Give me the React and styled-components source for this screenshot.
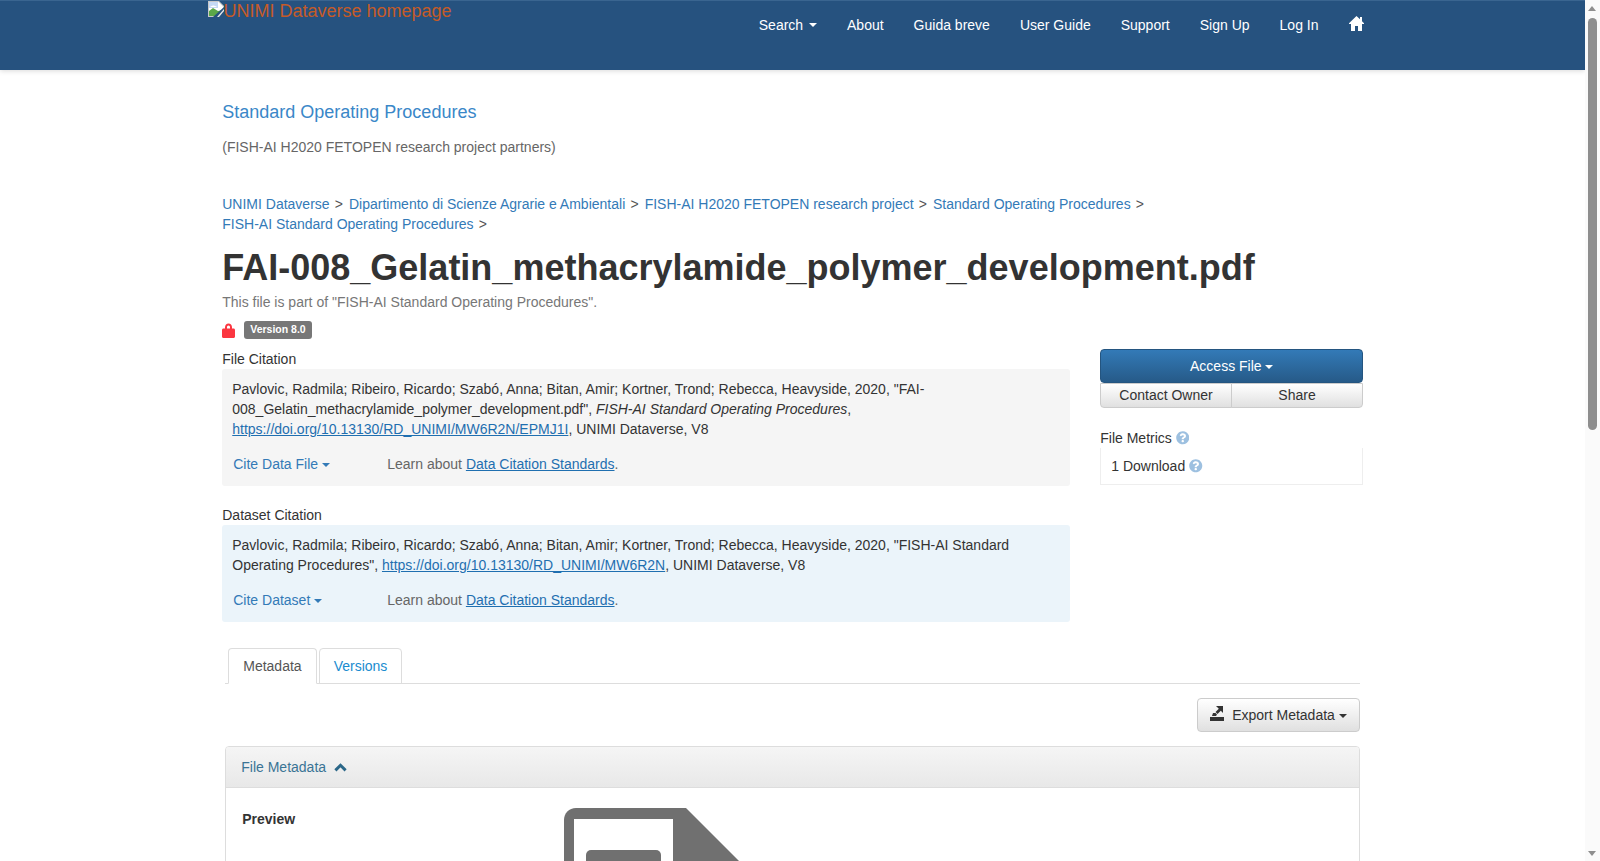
import React from "react";
import styled, { createGlobalStyle } from "styled-components";
import { FaQuestionCircle } from "react-icons/fa";

const GlobalStyle = createGlobalStyle`
  body {
    margin: 0;
    background: #fff;
    color: #333;
    font-family: "Liberation Sans", Arial, sans-serif;
    font-size: 14px;
    line-height: 20px;
  }
  * {
    box-sizing: border-box;
  }
`;

const Shell = styled.div`
  margin-right: 15px;
`;

const ScrollTrack = styled.div`
  position: fixed;
  top: 0;
  right: 0;
  bottom: 0;
  width: 15px;
  background: #fafafa;
`;

const ScrollArrow = styled.span`
  position: absolute;
  left: 3px;
  ${(p) => (p.$down ? "bottom: 5px;" : "top: 6px;")}
  width: 0;
  height: 0;
  border-left: 4px solid transparent;
  border-right: 4px solid transparent;
  ${(p) => (p.$down ? "border-top: 5px solid #8e8e8e;" : "border-bottom: 5px solid #8e8e8e;")}
`;

const ScrollThumb = styled.span`
  position: absolute;
  left: 3px;
  top: 18px;
  width: 9px;
  height: 412px;
  background: #8e8e8e;
  border-radius: 5px;
`;

const Navbar = styled.nav`
  height: 70px;
  background: #26527f;
  border-top: 1px solid #3a6590;
  box-shadow: 0 1px 5px rgba(0, 0, 0, 0.15);
`;

const NavInner = styled.div`
  width: 1170px;
  margin: 0 auto;
  display: flex;
  justify-content: space-between;
  align-items: flex-start;
`;

const Brand = styled.a`
  display: flex;
  align-items: flex-start;
  color: #c55b28;
  font-size: 18px;
  line-height: 20px;
`;

const NavList = styled.div`
  display: flex;
  margin-right: -1px;
`;

const NavLink = styled.a`
  padding: 14px 15px;
  color: #fff;
  display: flex;
  align-items: center;
  height: 48px;
`;

const Caret = styled.span`
  display: inline-block;
  width: 0;
  height: 0;
  margin-left: ${(p) => p.$gap || 0}px;
  vertical-align: middle;
  border-top: 4px solid currentColor;
  border-right: 4px solid transparent;
  border-left: 4px solid transparent;
`;

const Page = styled.main`
  width: 1170px;
  margin: 0 auto;
  padding: 0 15.25px 0 14.75px;
  min-height: 1666px;
`;

const DataverseHeader = styled.header`
  padding-top: 32px;
  height: 124px;
`;

const DataverseName = styled.a`
  display: block;
  color: #3a87c8;
  font-size: 18px;
`;

const Tagline = styled.p`
  margin: 15px 0 0;
  color: #666;
`;

const Breadcrumbs = styled.div`
  display: flex;
  flex-wrap: wrap;
  width: 960px;
`;

const Crumb = styled.span`
  color: #555;
  white-space: nowrap;
  margin-right: 6px;
  &::after {
    content: ">";
    margin-left: 5.2px;
  }
`;

const CrumbLink = styled.a`
  color: #337ab7;
`;

const Title = styled.h1`
  margin: 14px 0 0;
  font-size: 36px;
  line-height: 40px;
  font-weight: 700;
  color: #333;
`;

const PartOf = styled.p`
  margin: 4px 0 0;
  color: #777;
`;

const StatusRow = styled.div`
  display: flex;
  align-items: center;
  gap: 9px;
  height: 18px;
  margin-top: 9px;
`;

const VersionLabel = styled.span`
  background: #777;
  color: #fff;
  font-size: 10.5px;
  font-weight: 700;
  line-height: 10.5px;
  padding: 3px 6px 4px;
  border-radius: 3px;
`;

const Columns = styled.div`
  display: grid;
  grid-template-columns: 848px 263px;
  column-gap: 30px;
  margin-top: 10px;
`;

const CitationBlock = styled.section`
  margin-bottom: 19px;
  &:last-child {
    margin-bottom: 18px;
  }
`;

const BlockTitle = styled.div`
  height: 20px;
`;

const CitationBox = styled.div`
  padding: 10px 10px 12px;
  border-radius: 3px;
  background: ${(p) => p.$bg};
  color: #333;
`;

const CiteRow = styled.div`
  display: flex;
  margin-top: 15px;
`;

const CiteButton = styled.a`
  width: 155px;
  padding-left: 1px;
  color: #337ab7;
`;

const Learn = styled.span`
  color: #666;
`;

const DoiLink = styled.a`
  color: #1f6fb0;
  text-decoration: underline;
`;

const AccessButton = styled.a`
  display: block;
  height: 34px;
  line-height: 32px;
  text-align: center;
  color: #fff;
  border: 1px solid #245580;
  border-radius: 4px;
  background: linear-gradient(to bottom, #337ab7 0%, #265a88 100%);
`;

const ButtonGroup = styled.div`
  display: grid;
  grid-template-columns: 1fr 1fr;
`;

const GroupButton = styled.a`
  height: 25px;
  line-height: 23px;
  text-align: center;
  color: #333;
  border: 1px solid #ccc;
  background: linear-gradient(to bottom, #fff 0%, #e0e0e0 100%);
  border-radius: ${(p) => (p.$first ? "0 0 0 4px" : "0 0 4px 0")};
  margin-left: ${(p) => (p.$first ? 0 : -1)}px;
`;

const MetricsTitle = styled.div`
  margin-top: 20px;
  height: 20px;
  display: flex;
  align-items: center;
  gap: 4px;
`;

const MetricsBox = styled.div`
  height: 37px;
  padding: 8px 10px;
  display: flex;
  align-items: center;
  gap: 4px;
  border: 1px solid #eee;
  border-top: none;
`;

const Tabs = styled.div`
  display: flex;
  gap: 3px;
  margin: 8px 2px 0 3px;
  padding-left: 3px;
  height: 36px;
  border-bottom: 1px solid #ddd;
`;

const Tab = styled.a`
  height: 36px;
  padding: 7px 14px 7px 14px;
  margin-right: ${(p) => (p.$active ? -1 : 0)}px;
  border: 1px solid #ddd;
  border-bottom: ${(p) => (p.$active ? "1px solid #fff" : "1px solid #ddd")};
  border-radius: 4px 4px 0 0;
  color: ${(p) => (p.$active ? "#555" : "#1a8ccf")};
`;

const Toolbar = styled.div`
  display: flex;
  justify-content: flex-end;
  margin: 14px 2px 14px 3px;
`;

const ExportButton = styled.a`
  display: block;
  height: 34px;
  line-height: 32px;
  padding: 0 12px 0 12px;
  white-space: nowrap;
  color: #333;
  border: 1px solid #ccc;
  border-radius: 4px;
  background: linear-gradient(to bottom, #fff 0%, #e0e0e0 100%);
`;

const ExportIcon = styled.svg`
  width: 14px;
  height: 15px;
  margin-right: 8.5px;
  vertical-align: -1px;
`;

const Panel = styled.section`
  margin: 0 2px 0 3px;
  border: 1px solid #ddd;
  border-radius: 4px;
  min-height: 900px;
`;

const PanelHeading = styled.div`
  height: 41px;
  padding: 0 15px;
  display: flex;
  align-items: center;
  gap: 8px;
  color: #3a7495;
  background: linear-gradient(to bottom, #f5f5f5 0%, #e8e8e8 100%);
  border-bottom: 1px solid #ddd;
  border-radius: 3px 3px 0 0;
`;

const PanelBody = styled.div`
  display: grid;
  grid-template-columns: 322px 1fr;
  padding: 20px 16px;
`;

const PreviewLabel = styled.strong`
  font-weight: 700;
  color: #333;
  line-height: 22px;
`;

const BigFile = styled.svg`
  display: block;
  width: 190px;
  height: 220px;
`;

const BrokenImage = () => (
  <svg width="16" height="16" viewBox="0 0 16 16">
    <path d="M0 0h11l5 5v11H0z" fill="#c9c9c9" />
    <path d="M1 1h9.500l4.500 4.500V15H1z" fill="#fff" />
    <path d="M1 10l4-3 5 3 5-1v6H1z" fill="#5ba849" />
    <path d="M1 1h9v6H1z" fill="#c5d9f5" />
    <path d="M2 6c2-2 4-2 7 0z" fill="#fff" />
    <path d="M16 6L5 16h11z" fill="#26527f" />
    <path d="M16 8l-7 8h2l5-6z" fill="#e8e8e8" />
  </svg>
);

const LockIcon = () => (
  <svg width="13" height="15" viewBox="0 0 13 15">
    <path
      d="M3 5.500V4.200C3 2 4.500 .5 6.500 .5S10 2 10 4.200V5.500h1.500c.9 0 1.500.6 1.500 1.500v6.500c0 .9-.6 1.500-1.500 1.500h-10C.6 15 0 14.400 0 13.500V7c0-.9.6-1.500 1.500-1.500zm2 0h3V4.300C8 3.300 7.400 2.500 6.500 2.500S5 3.300 5 4.300z"
      fill="#fb3640"
    />
  </svg>
);

const HomeIcon = () => (
  <svg width="15" height="15" viewBox="0 0 15 15" style={{ marginTop: -3 }}>
    <path
      d="M7.500 0L11 3.300V1h2v4.200L15 7.200V8h-2v7H9v-5H6v5H2V8H0v-.8z"
      fill="#fff"
    />
  </svg>
);

const ChevronUp = () => (
  <svg width="13" height="9" viewBox="0 0 13 9">
    <path d="M1.400 7.400L6.500 2.300l5.100 5.100" fill="none" stroke="#2b6788" strokeWidth="3" />
  </svg>
);

const breadcrumbs = [
  "UNIMI Dataverse",
  "Dipartimento di Scienze Agrarie e Ambientali",
  "FISH-AI H2020 FETOPEN research project",
  "Standard Operating Procedures",
  "FISH-AI Standard Operating Procedures",
];

const Help = () => <FaQuestionCircle size={13.5} color="#9dc0e0" />;

export default function App() {
  return (
    <>
      <GlobalStyle />
      <Shell>
        <Navbar>
          <NavInner>
            <Brand>
              <BrokenImage />
              UNIMI Dataverse homepage
            </Brand>
            <NavList>
              <NavLink>
                Search&nbsp;
                <Caret $gap={2} />
              </NavLink>
              <NavLink>About</NavLink>
              <NavLink>Guida breve</NavLink>
              <NavLink>User Guide</NavLink>
              <NavLink>Support</NavLink>
              <NavLink>Sign Up</NavLink>
              <NavLink>Log In</NavLink>
              <NavLink>
                <HomeIcon />
              </NavLink>
            </NavList>
          </NavInner>
        </Navbar>
        <Page>
          <DataverseHeader>
            <DataverseName>Standard Operating Procedures</DataverseName>
            <Tagline>(FISH-AI H2020 FETOPEN research project partners)</Tagline>
          </DataverseHeader>
          <Breadcrumbs>
            {breadcrumbs.map((b) => (
              <Crumb key={b}>
                <CrumbLink>{b}</CrumbLink>
              </Crumb>
            ))}
          </Breadcrumbs>
          <Title>FAI-008_Gelatin_methacrylamide_polymer_development.pdf</Title>
          <PartOf>This file is part of "FISH-AI Standard Operating Procedures".</PartOf>
          <StatusRow>
            <LockIcon />
            <VersionLabel>Version 8.0</VersionLabel>
          </StatusRow>
          <Columns>
            <div>
              <CitationBlock>
                <BlockTitle>File Citation</BlockTitle>
                <CitationBox $bg="#f5f5f5">
                  Pavlovic, Radmila; Ribeiro, Ricardo; Szabó, Anna; Bitan, Amir; Kortner, Trond; Rebecca, Heavyside, 2020, "FAI-
                  <br />
                  008_Gelatin_methacrylamide_polymer_development.pdf", <em>FISH-AI Standard Operating Procedures</em>,
                  <br />
                  <DoiLink>https://doi.org/10.13130/RD_UNIMI/MW6R2N/EPMJ1I</DoiLink>, UNIMI Dataverse, V8
                  <CiteRow>
                    <CiteButton>
                      Cite Data File <Caret />
                    </CiteButton>
                    <Learn>
                      Learn about <DoiLink>Data Citation Standards</DoiLink>.
                    </Learn>
                  </CiteRow>
                </CitationBox>
              </CitationBlock>
              <CitationBlock>
                <BlockTitle>Dataset Citation</BlockTitle>
                <CitationBox $bg="#ebf4fa">
                  Pavlovic, Radmila; Ribeiro, Ricardo; Szabó, Anna; Bitan, Amir; Kortner, Trond; Rebecca, Heavyside, 2020, "FISH-AI Standard
                  <br />
                  Operating Procedures", <DoiLink>https://doi.org/10.13130/RD_UNIMI/MW6R2N</DoiLink>, UNIMI Dataverse, V8
                  <CiteRow>
                    <CiteButton>
                      Cite Dataset <Caret />
                    </CiteButton>
                    <Learn>
                      Learn about <DoiLink>Data Citation Standards</DoiLink>.
                    </Learn>
                  </CiteRow>
                </CitationBox>
              </CitationBlock>
            </div>
            <aside>
              <AccessButton>
                Access File <Caret />
              </AccessButton>
              <ButtonGroup>
                <GroupButton $first>Contact Owner</GroupButton>
                <GroupButton>Share</GroupButton>
              </ButtonGroup>
              <MetricsTitle>
                File Metrics <Help />
              </MetricsTitle>
              <MetricsBox>
                1 Download <Help />
              </MetricsBox>
            </aside>
          </Columns>
          <Tabs>
            <Tab $active>Metadata</Tab>
            <Tab>Versions</Tab>
          </Tabs>
          <Toolbar>
            <ExportButton>
              <ExportIcon viewBox="0 0 14 15">
                <path d="M0 11h14v4H0zM2 10l1-3h2.500l1.500 1.500L6 10zM6 0h7v7l-2.200-2.200L7.500 8 5.500 6l3.300-3.300z" fill="#333" />
              </ExportIcon>
              Export Metadata <Caret $gap={0.5} />
            </ExportButton>
          </Toolbar>
          <Panel>
            <PanelHeading>
              File Metadata <ChevronUp />
            </PanelHeading>
            <PanelBody>
              <PreviewLabel>Preview</PreviewLabel>
              <BigFile viewBox="0 0 190 220">
                <path
                  d="M12 0h110l68 68v140c0 7-5 12-12 12H12c-7 0-12-5-12-12V12C0 5 5 0 12 0z"
                  fill="#707070"
                />
                <path d="M10 11h99v199H10z" fill="#fff" />
                <rect x="22" y="42" width="75" height="18" rx="5" fill="#707070" />
              </BigFile>
            </PanelBody>
          </Panel>
        </Page>
      </Shell>
      <ScrollTrack>
        <ScrollArrow />
        <ScrollThumb />
        <ScrollArrow $down />
      </ScrollTrack>
    </>
  );
}
